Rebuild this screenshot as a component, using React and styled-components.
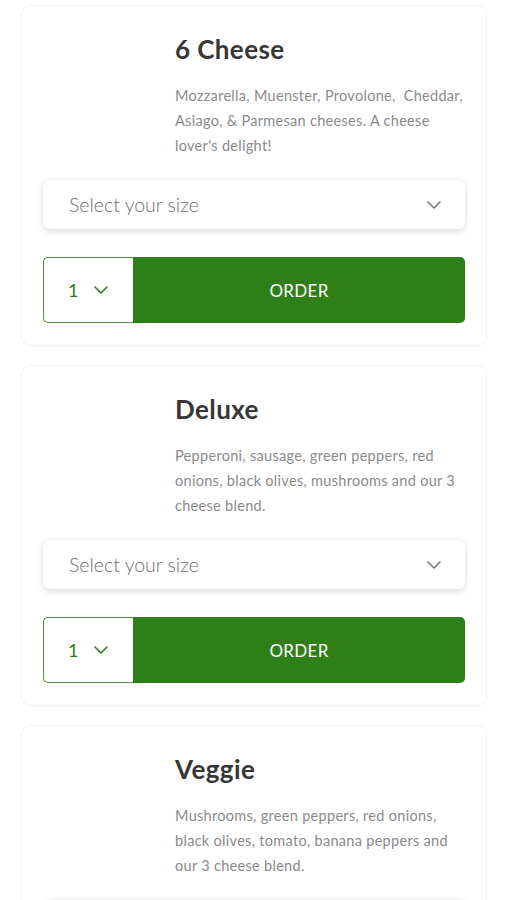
import styled, { createGlobalStyle } from 'styled-components';

const Global = createGlobalStyle`
  body {
    margin: 0;
    background: #ffffff;
    font-family: Lato, "Noto Sans", "Liberation Sans", sans-serif;
  }
`

const List = styled.div`
  display: flex;
  flex-direction: column;
  gap: 19px;
  padding: 5px 20px 20px 21px;
`

const Card = styled.div`
  background: #fff;
  border: 1px solid #f1f1f1;
  border-radius: 10px;
  padding: 27px 21px 22px 21px;
  display: flex;
  flex-direction: column;
`

const Head = styled.div`
  display: flex;
`

const Thumb = styled.div`
  width: 132px;
  flex-shrink: 0;
`

const Info = styled.div`
  flex: 1;
  padding-right: 2px;
`

const Title = styled.h2`
  margin: 0;
  font-size: 26px;
  line-height: 32px;
  font-weight: 700;
  color: #363636;
  letter-spacing: 0.4px;
`

const Desc = styled.p`
  margin: 18px 0 0;
  font-size: 14.5px;
  line-height: 25px;
  letter-spacing: 0.3px;
  color: #8a8a8a;
  white-space: pre-wrap;
`

const Select = styled.div`
  margin-top: 22px;
  height: 49px;
  border-radius: 7px;
  background: #fff;
  box-shadow: 0 2px 7px rgba(0, 0, 0, 0.16);
  display: flex;
  align-items: center;
  justify-content: space-between;
  padding: 0 24px 0 26px;
  font-size: 19.5px;
  font-weight: 300;
  color: #6e6e6e;
`

const OrderRow = styled.div`
  margin-top: 28px;
  height: 66px;
  display: flex;
`

const Qty = styled.div`
  width: 90px;
  box-sizing: border-box;
  border: 1.5px solid #4f8f3d;
  border-right: none;
  border-radius: 5px 0 0 5px;
  display: flex;
  align-items: center;
  gap: 16px;
  padding-left: 24px;
  font-size: 18px;
  color: #2e7d18;
`

const OrderButton = styled.button`
  flex: 1;
  border: none;
  border-radius: 0 5px 5px 0;
  background: #2f7f19;
  color: #fff;
  font-family: inherit;
  font-size: 17px;
  font-weight: 400;
  letter-spacing: 0.3px;
  cursor: pointer;
`

const Chevron = ({ color }) => (
  <svg width="14" height="8" viewBox="0 0 14 8" fill="none">
    <polyline points="1,1 7,7 13,1" stroke={color} strokeWidth="1.6" strokeLinecap="round" strokeLinejoin="round" />
  </svg>
)

const pizzas = [
  {
    name: '6 Cheese',
    desc: "Mozzarella, Muenster, Provolone,  Cheddar, Asiago, & Parmesan cheeses. A cheese lover's delight!",
  },
  {
    name: 'Deluxe',
    desc: 'Pepperoni, sausage, green peppers, red onions, black olives, mushrooms and our 3 cheese blend.',
  },
  {
    name: 'Veggie',
    desc: 'Mushrooms, green peppers, red onions, black olives, tomato, banana peppers and our 3 cheese blend.',
  },
]

export default function App() {
  return <>
    <Global />
    <List>
      {pizzas.map(p => (
        <Card key={p.name}>
          <Head>
            <Thumb />
            <Info>
              <Title>{p.name}</Title>
              <Desc>{p.desc}</Desc>
            </Info>
          </Head>
          <Select>
            <span>Select your size</span>
            <Chevron color="#777" />
          </Select>
          <OrderRow>
            <Qty>
              <span>1</span>
              <Chevron color="#2e7d18" />
            </Qty>
            <OrderButton>ORDER</OrderButton>
          </OrderRow>
        </Card>
      ))}
    </List>
  </>
}
